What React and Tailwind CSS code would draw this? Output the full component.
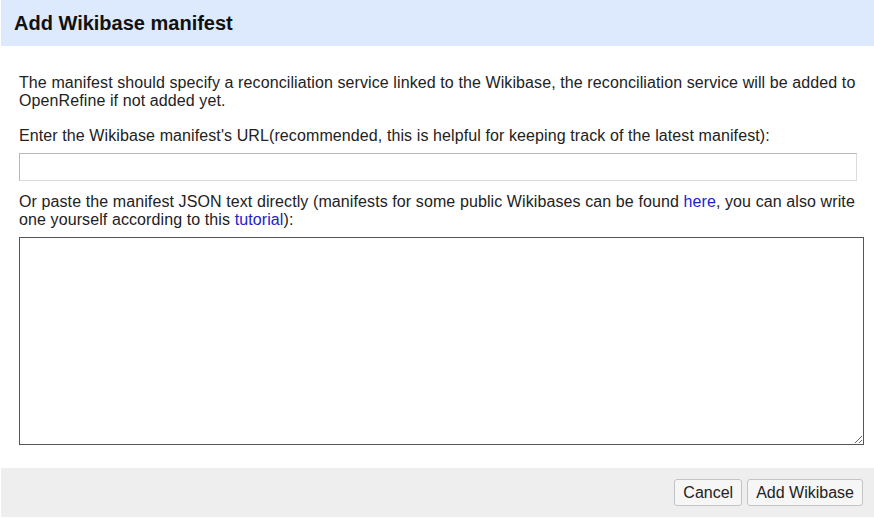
import React from 'react';

const App = () => {
  return (
    <div className="w-[874px] h-[519px] bg-white font-['Liberation_Sans',Arial,sans-serif] text-[16px] text-[#222222] pl-px pb-[2px] flex flex-col">
      <div className="h-[46px] bg-[#dde9fc] flex items-center px-[13px]">
        <h1 className="text-[20px] font-bold text-[#111111]">Add Wikibase manifest</h1>
      </div>

      <div className="flex-1 px-[18px] pt-[28px] leading-[18px] tracking-[0.1px]">
        <p>
          The manifest should specify a reconciliation service linked to the Wikibase, the reconciliation service will be added to OpenRefine if not added yet.
        </p>
        <p className="mt-[17px]">
          Enter the Wikibase manifest's URL(recommended, this is helpful for keeping track of the latest manifest):
        </p>
        <input
          type="text"
          className="mt-[8px] block w-[838px] h-[28px] border border-[#dcdcdc] border-t-[#b8b8b8] border-l-[#b8b8b8] outline-none"
        />
        <p className="mt-[12px]">
          Or paste the manifest JSON text directly (manifests for some public Wikibases can be found{' '}
          <a className="text-[#2222cc]">here</a>, you can also write one yourself according to this{' '}
          <a className="text-[#2222cc]">tutorial</a>):
        </p>
        <textarea className="mt-[8px] block w-[845px] h-[208px] border border-[#555555] outline-none resize" />
      </div>

      <div className="h-[49px] bg-[#eeeeee] flex items-center justify-end gap-[5px] pr-[11px]">
        <button className="h-[27px] px-[8px] border border-[#c4c4c4] rounded-[3px] bg-[#f6f6f6] text-[16px] text-[#222222]">
          Cancel
        </button>
        <button className="h-[27px] px-[8px] border border-[#c4c4c4] rounded-[3px] bg-[#f6f6f6] text-[16px] text-[#222222]">
          Add Wikibase
        </button>
      </div>
    </div>
  );
};

export default App;
